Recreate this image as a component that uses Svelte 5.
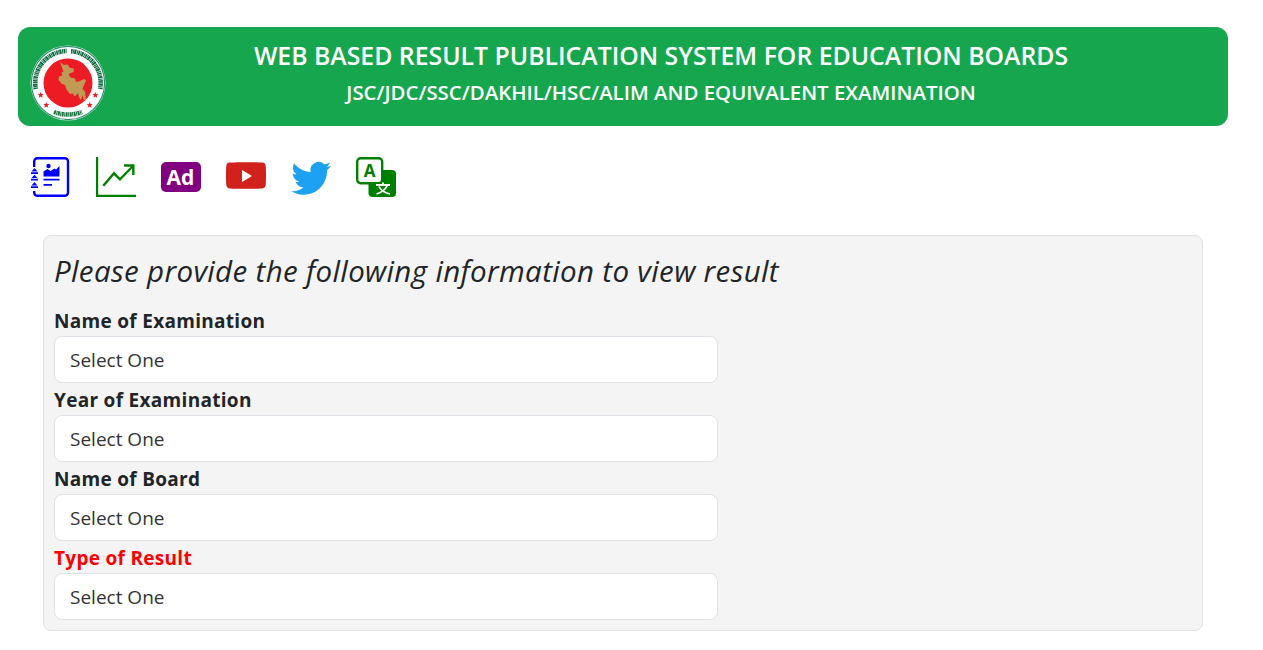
<script>
  const fields = [
    { label: 'Name of Examination' },
    { label: 'Year of Examination' },
    { label: 'Name of Board' },
    { label: 'Type of Result', red: true }
  ];
  const stars = [
    [10.7, 50],
    [16.3, 60],
    [59.7, 60],
    [65.3, 50]
  ];
</script>

<div class="page">
  <header class="banner">
    <svg class="logo" viewBox="0 0 76 76" aria-hidden="true">
      <circle cx="38" cy="38" r="37.5" fill="#fff" />
      <circle cx="38" cy="38" r="36.6" fill="none" stroke="#2a8f6a" stroke-width="1.200" />
      <g class="soft">
        <path d="M5.800 44A32 32 0 0 1 37 6" fill="none" stroke="#0f6a40" stroke-width="4.600" stroke-dasharray="1.600 .5 .9 .4 2 .6 1 .5" />
        <path d="M41 6.200A32 32 0 0 1 70.200 44" fill="none" stroke="#0f6a40" stroke-width="4.600" stroke-dasharray="1.600 .5 .9 .4 2 .6 1 .5" />
        <path d="M24 67Q38 72 52 67" fill="none" stroke="#1f7546" stroke-width="4.500" stroke-dasharray="2 .5 1 .5" />
        <circle cx="38" cy="38" r="24.500" fill="#ed1c24" />
        <path d="M30 17l4 3 3.500-.5 2.500 3.500 4 .5-.5 3.500-5 2 2 3.500 4.500 1 1 3.500 4-1 4-2 2 1.500-1.500 3.500-2 4.500 2.500 3.500 1 8.500-2.500-1-1-4.500-1.500 5-2-2.500-1-4.500-3.500 3.500-1.500-3-3 .5-3.500-4.500-1.500-4.500-3-1-3.500-4 .5-3.500 3.500-1-1-3 2-1-1.500-4z" fill="#bf9b56" />
        {#each stars as [x, y]}
          <path transform="translate({x} {y})" d="M0-3l.8 2.100 2.200.1-1.700 1.400.6 2.200L0 1.600-1.900 2.800l.6-2.200L-3-.8l2.200-.1z" fill="#e31b23" />
        {/each}
      </g>
    </svg>
    <div class="titles">
      <h1>WEB BASED RESULT PUBLICATION SYSTEM FOR EDUCATION BOARDS</h1>
      <h2>JSC/JDC/SSC/DAKHIL/HSC/ALIM AND EQUIVALENT EXAMINATION</h2>
    </div>
  </header>

  <nav class="icons">
    <svg viewBox="0 0 40 40" aria-hidden="true">
      <path d="M3.200 10V4.500A3.200 3.200 0 0 1 6.500 1.200h27.300A3.200 3.200 0 0 1 37 4.500v31a3.200 3.200 0 0 1-3.200 3.300H6.500a3.200 3.200 0 0 1-3.300-3.300V34" fill="none" stroke="#00f" stroke-width="2.400" />
      <path d="M.5 14.500L3.500 11l3 3.500zM0 15.300h7v1.700H0zM.5 21L3.500 17.800 6.500 21zM0 21.800h7v1.700H0zM.5 28.500L3.500 25l3 3.500zM0 29.300h7v1.700H0z" fill="#00f" />
      <path d="M12.500 19.500v-5l4-2.500 3 2 4-2.500 1.500 1 3.500-3.500v10.500z" fill="#00f" />
      <circle cx="17.500" cy="9" r="2.200" fill="#00f" />
      <path d="M12.500 21.800h16v1.800h-16zM12.500 27h8.500v1.800h-8.500z" fill="#00f" />
    </svg>
    <svg viewBox="0 0 40 40" aria-hidden="true">
      <path d="M1.100 0v38.900H40" fill="none" stroke="#008000" stroke-width="2.200" />
      <path d="M7.300 28.700L18 16.300l6 6L37 9" fill="none" stroke="#008000" stroke-width="2.400" />
      <path d="M28 8.500h9.300V18" fill="none" stroke="#008000" stroke-width="2.400" />
    </svg>
    <svg viewBox="0 0 40 40" aria-hidden="true">
      <rect y="5" width="40" height="30" rx="5" fill="#800080" />
      <text x="19.500" y="27.500" class="ad">Ad</text>
    </svg>
    <svg viewBox="0 0 40 40" aria-hidden="true">
      <path d="M3.500 5.600C10 5 30 5 36.500 5.600 38.500 5.800 39.500 7 39.700 9c.4 4 .4 15 0 19-.2 2-1.200 3.200-3.200 3.400-6.500.6-26.500.6-33 0C1.500 31.200.5 30 .3 28-.1 24-.1 13 .3 9 .5 7 1.500 5.800 3.500 5.600z" fill="#d0211d" />
      <path d="M16 13l10 6-10 6z" fill="#fff" />
    </svg>
    <svg viewBox="0 0 40 40" aria-hidden="true">
      <path d="M40 8.800c-1.500.6-3 1.100-4.700 1.300 1.700-1 3-2.600 3.600-4.500-1.600.9-3.300 1.600-5.200 2a8.200 8.200 0 0 0-14 7.500C13.100 14.800 7.100 11.500 3 6.600a8.200 8.200 0 0 0 2.500 10.900c-1.300 0-2.600-.4-3.700-1v.1c0 4 2.800 7.300 6.600 8-.7.200-1.400.3-2.200.3-.5 0-1 0-1.500-.1 1 3.200 4.100 5.600 7.700 5.700A16.500 16.500 0 0 1 0 34a23.200 23.200 0 0 0 12.600 3.700c15.100 0 23.400-12.500 23.400-23.400v-1.100c1.600-1.100 3-2.600 4-4.400z" fill="#1da1f2" />
    </svg>
    <svg viewBox="0 0 40 40" aria-hidden="true">
      <rect x="12.500" y="13" width="27.500" height="27" rx="4" fill="#008000" />
      <rect x="1.200" y="1.200" width="25" height="25" rx="3.500" fill="#fff" stroke="#008000" stroke-width="2.400" />
      <text x="13.700" y="20" class="a">A</text>
      <path d="M20 28h14M27 25.500V28M31.500 28c-1.500 4-5 7-11 9M23 29.500c1.500 3.500 5 6 11 7.500" fill="none" stroke="#fff" stroke-width="1.800" />
    </svg>
  </nav>

  <main class="panel">
    <h3>Please provide the following information to view result</h3>
    {#each fields as f}
      <label class:red={f.red}>
        <span>{f.label}</span>
        <select>
          <option>Select One</option>
        </select>
      </label>
    {/each}
  </main>
</div>

<style>
  :global(body) {
    margin: 0;
    background: #fff;
  }
  .page {
    padding: 27px 35px 0 18px;
    font-family: "Open Sans", "Noto Sans", sans-serif;
    color: #212529;
  }
  .banner {
    height: 99px;
    box-sizing: border-box;
    background: #16a74e;
    border-radius: 12px;
    position: relative;
    display: flex;
    align-items: flex-start;
    justify-content: center;
    color: #fff;
  }
  .logo {
    position: absolute;
    left: 12px;
    top: 18px;
    width: 76px;
    height: 76px;
  }
  .soft {
    filter: blur(0.3px);
  }
  .titles {
    text-align: center;
    padding: 10px 0 0 76px;
  }
  h1 {
    margin: 0;
    font-size: 24.8px;
    line-height: 36px;
    font-weight: 600;
  }
  h2 {
    margin: 0;
    font-size: 20.4px;
    line-height: 38px;
    font-weight: 600;
  }
  .icons {
    display: flex;
    gap: 25px;
    padding: 31px 0 0 13px;
  }
  .icons svg {
    width: 40px;
    height: 40px;
    display: block;
  }
  .ad {
    font: 700 21px "Open Sans", sans-serif;
    fill: #fff;
    text-anchor: middle;
  }
  .a {
    font: 700 17px "Open Sans", sans-serif;
    fill: #008000;
    text-anchor: middle;
  }
  .panel {
    margin: 38px 25px 0;
    padding: 10px;
    background: #f4f4f4;
    border: 1px solid #e0e0e0;
    border-radius: 8px;
    height: 396px;
    box-sizing: border-box;
  }
  h3 {
    margin: 0;
    font-size: 29.5px;
    line-height: 50px;
    font-weight: 400;
    font-style: italic;
    letter-spacing: .35px;
  }
  label {
    display: block;
    font-size: 19px;
    font-weight: 700;
    letter-spacing: .3px;
  }
  label span {
    display: block;
    line-height: 32px;
    position: relative;
    top: 1px;
  }
  label:first-of-type {
    margin-top: 8px;
  }
  .red {
    color: #f00;
  }
  select {
    display: block;
    appearance: none;
    width: 664px;
    height: 47px;
    box-sizing: border-box;
    padding: 0 15px;
    background: #fff;
    border: 1px solid #dee2e6;
    border-radius: 8px;
    font-family: inherit;
    font-size: 19px;
    font-weight: 400;
    letter-spacing: 0;
    color: #333;
  }
</style>
